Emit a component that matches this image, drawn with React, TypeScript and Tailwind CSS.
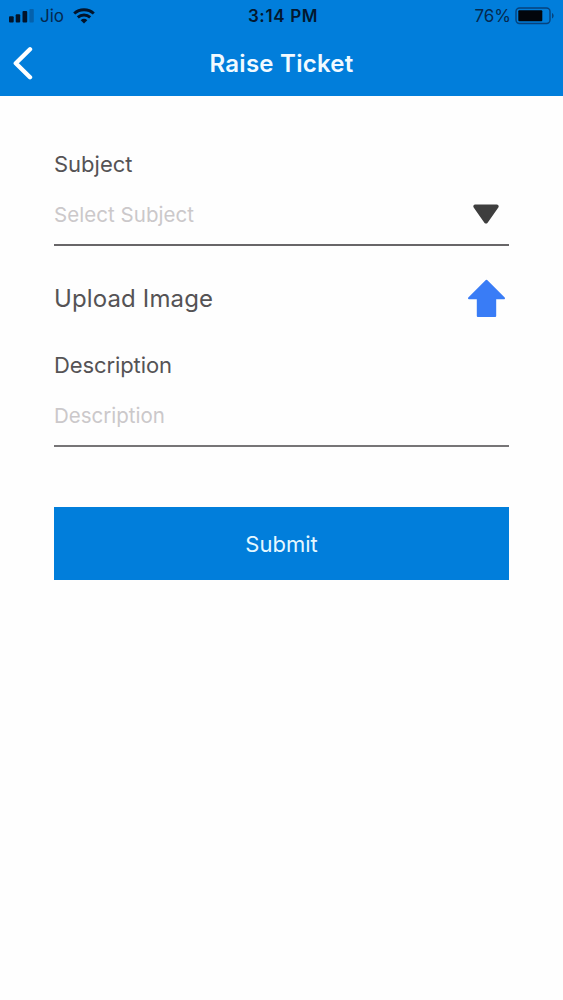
import React from "react";

function StatusBar() {
  return (
    <div className="grid h-8 grid-cols-3 items-center text-[17px] leading-8 text-[#05294f]">
      <div className="flex items-center pl-[9px]">
        <svg width="25" height="14" viewBox="0 0 25 14" aria-hidden="true">
          <rect x="0" y="7.3" width="4.7" height="6.2" rx="1" fill="#03142a" />
          <rect x="6.7" y="5.2" width="4.5" height="8.3" rx="1" fill="#03142a" />
          <rect x="13.5" y="2" width="4.7" height="11.5" rx="1" fill="#03142a" />
          <rect x="20.4" y="0" width="4.4" height="13.5" rx="1" fill="#0461ac" />
        </svg>
        <span className="ml-[6px] w-[24px] whitespace-nowrap">Jio</span>
        <svg className="ml-[9px]" width="22" height="16" viewBox="0 0 22 16" fill="none" stroke="#03142a" strokeWidth="2.9" aria-hidden="true">
          <path d="M1.2 5.5C6.7 .4 15.3 .4 20.8 5.5" />
          <path d="M4.8 9.4c3.5-3.2 8.9-3.2 12.4 0" />
          <path d="M7.7 12.2c1.9-1.8 4.7-1.8 6.6 0L11 15.5z" fill="#03142a" stroke="none" />
        </svg>
      </div>
      <div className="pl-[3px] text-center text-[17px] font-semibold tracking-[0.65px] whitespace-nowrap text-[#03182f]">3:14 PM</div>
      <div className="flex items-center justify-end pr-[8px]">
        <span className="whitespace-nowrap">76%</span>
        <svg className="ml-[4px]" width="40" height="18" viewBox="0 0 40 18" aria-hidden="true">
          <rect x="1" y="1" width="34" height="15.5" rx="3.5" fill="none" stroke="#07427c" strokeWidth="1.4" />
          <rect x="3.3" y="3.2" width="24" height="11" rx="1" fill="#02060c" />
          <path d="M37 6c2.2 1 2.2 4.5 0 5.5z" fill="#07427c" />
        </svg>
      </div>
    </div>
  );
}

export default function App() {
  return (
    <div className="min-h-[1000px] w-full bg-[#fefefe] font-['Inter','Liberation_Sans',sans-serif] text-[#555355]">
      <header className="h-24 bg-[#017edb]">
        <StatusBar />
        <div className="grid h-[62px] grid-cols-[54px_1fr_54px] items-center">
          <button type="button" aria-label="Back" className="pl-[12px]">
            <svg width="22" height="34" viewBox="0 0 22 34" fill="none" stroke="white" strokeWidth="4.4" strokeLinecap="round" strokeLinejoin="round">
              <path d="M18 3.3 3.8 17.3 18 31.2" />
            </svg>
          </button>
          <h1 className="pt-[2px] text-center text-[24px] font-semibold tracking-[0.25px] whitespace-nowrap text-[#f1faff]">Raise Ticket</h1>
        </div>
      </header>
      <main className="flex flex-col px-[54px] pt-[54px]">
        <div className="h-7 text-[22px] leading-7">Subject</div>
        <div className="mt-[14px] flex h-[54px] items-center justify-between border-b-2 border-[#686668] pr-[9px]">
          <span className="mb-[6px] text-[20.5px] leading-7 tracking-[0.05px] text-[#cbc8ca]">Select Subject</span>
          <svg className="mb-[8px]" width="28" height="22" viewBox="0 0 28 22" fill="#3e3e3e" stroke="#3e3e3e" strokeWidth="4" strokeLinejoin="round" aria-hidden="true">
            <path d="M3.3 3.4h21.4L14 18.5z" />
          </svg>
        </div>
        <div className="mt-[32px] flex h-10 items-center justify-between pr-[3px]">
          <span className="pt-[2px] text-[24px] leading-8 tracking-[0.13px]">Upload Image</span>
          <svg width="39" height="39" viewBox="0 0 39 39" fill="#397cf6" stroke="#397cf6" strokeWidth="2" strokeLinejoin="round" aria-hidden="true">
            <path d="M19.5 1.8 37 19.3h-8.8v17.6H10.8V19.3H2z" />
          </svg>
        </div>
        <div className="mt-[33px] h-7 text-[22px] leading-7 tracking-[-0.1px]">Description</div>
        <div className="mt-[14px] flex h-[54px] items-center border-b-2 border-[#777577]">
          <span className="mb-[6px] text-[20.5px] leading-7 text-[#cbc8ca]">Description</span>
        </div>
        <button type="button" className="mt-[60px] h-[73px] bg-[#017edb] pt-px text-[22px] text-[#e5f8ff]">
          Submit
        </button>
      </main>
    </div>
  );
}
